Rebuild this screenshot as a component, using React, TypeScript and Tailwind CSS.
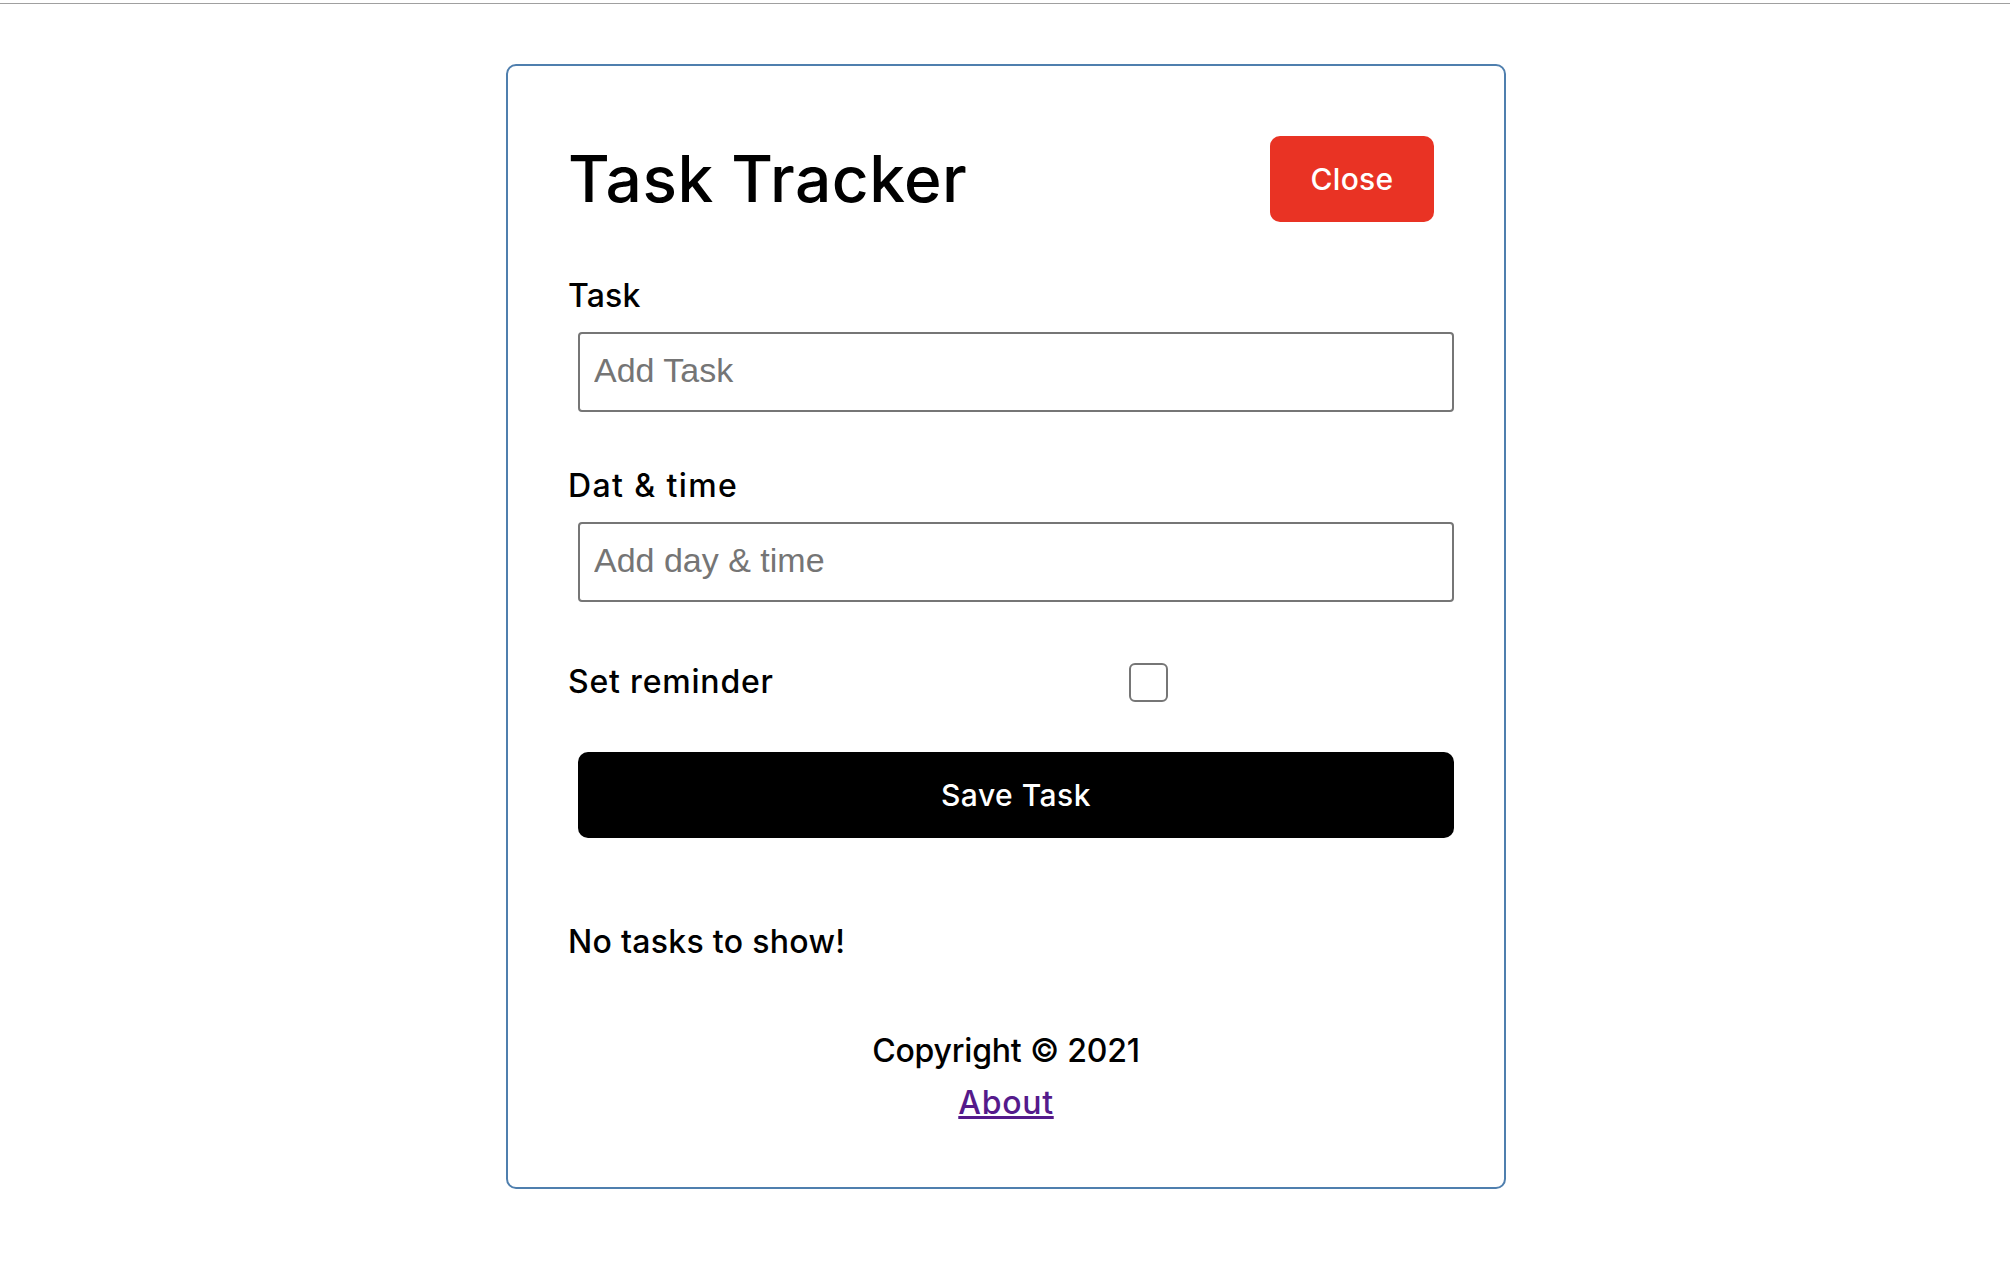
export default function App() {
  return (
    <div className="min-h-screen bg-white font-['Inter',sans-serif] font-medium text-black">
      <div className="pt-[3px]">
        <div className="h-px bg-[#a0a0a0]" />
      </div>
      <div className="flex justify-center pl-[2px]">
        <div className="mt-[60px] w-[1000px] rounded-[10px] border-2 border-[#4f7fae] px-[60px] py-[60px]">
          <header className="mb-[40px] flex items-center justify-between">
            <h1 className="text-[64px] font-medium leading-none tracking-[0.5px]">Task Tracker</h1>
            <button className="m-[10px] flex h-[86px] w-[164px] items-center justify-center rounded-[10px] bg-[#e93324] text-[30px] tracking-[0.3px] text-white">
              Close
            </button>
          </header>

          <form>
            <div>
              <label className="block text-[32px] leading-[48px] tracking-[0.2px]">Task</label>
              <input
                type="text"
                placeholder="Add Task"
                className="ml-[10px] mt-[12px] block h-[80px] w-[876px] rounded-[4px] border-2 border-[#767676] px-[14px] pb-[4px] font-['Liberation_Sans',Arial,sans-serif] text-[34px] font-normal outline-none placeholder:text-[#757575]"
              />
            </div>
            <div className="mt-[50px]">
              <label className="block text-[32px] leading-[48px] tracking-[1.4px]">Dat &amp; time</label>
              <input
                type="text"
                placeholder="Add day & time"
                className="ml-[10px] mt-[12px] block h-[80px] w-[876px] rounded-[4px] border-2 border-[#767676] px-[14px] pb-[4px] font-['Liberation_Sans',Arial,sans-serif] text-[34px] font-normal outline-none placeholder:text-[#757575]"
              />
            </div>
            <div className="mt-[50px] flex h-[60px] items-center">
              <label className="flex-1 text-[32px] leading-[48px] tracking-[0.8px]">Set reminder</label>
              <div className="mx-[10px] flex flex-[2] items-center justify-center">
                <span className="block h-[39px] w-[39px] rounded-[6px] border-2 border-[#767676] bg-white" />
              </div>
            </div>
            <button
              type="button"
              className="ml-[10px] mt-[40px] flex h-[86px] w-[876px] items-center justify-center rounded-[10px] bg-black text-[30px] tracking-[0.5px] text-white"
            >
              Save Task
            </button>
          </form>

          <p className="mt-[80px] text-[32px] leading-[48px] tracking-[0.3px]">No tasks to show!</p>

          <footer className="mt-[61px] text-center">
            <p className="text-[32px] leading-[48px] tracking-[-0.2px]">Copyright © 2021</p>
            <a href="#" className="mt-[4px] inline-block text-[32px] leading-[48px] tracking-[0.7px] text-[#551a8b] underline">
              About
            </a>
          </footer>
        </div>
      </div>
    </div>
  );
}
